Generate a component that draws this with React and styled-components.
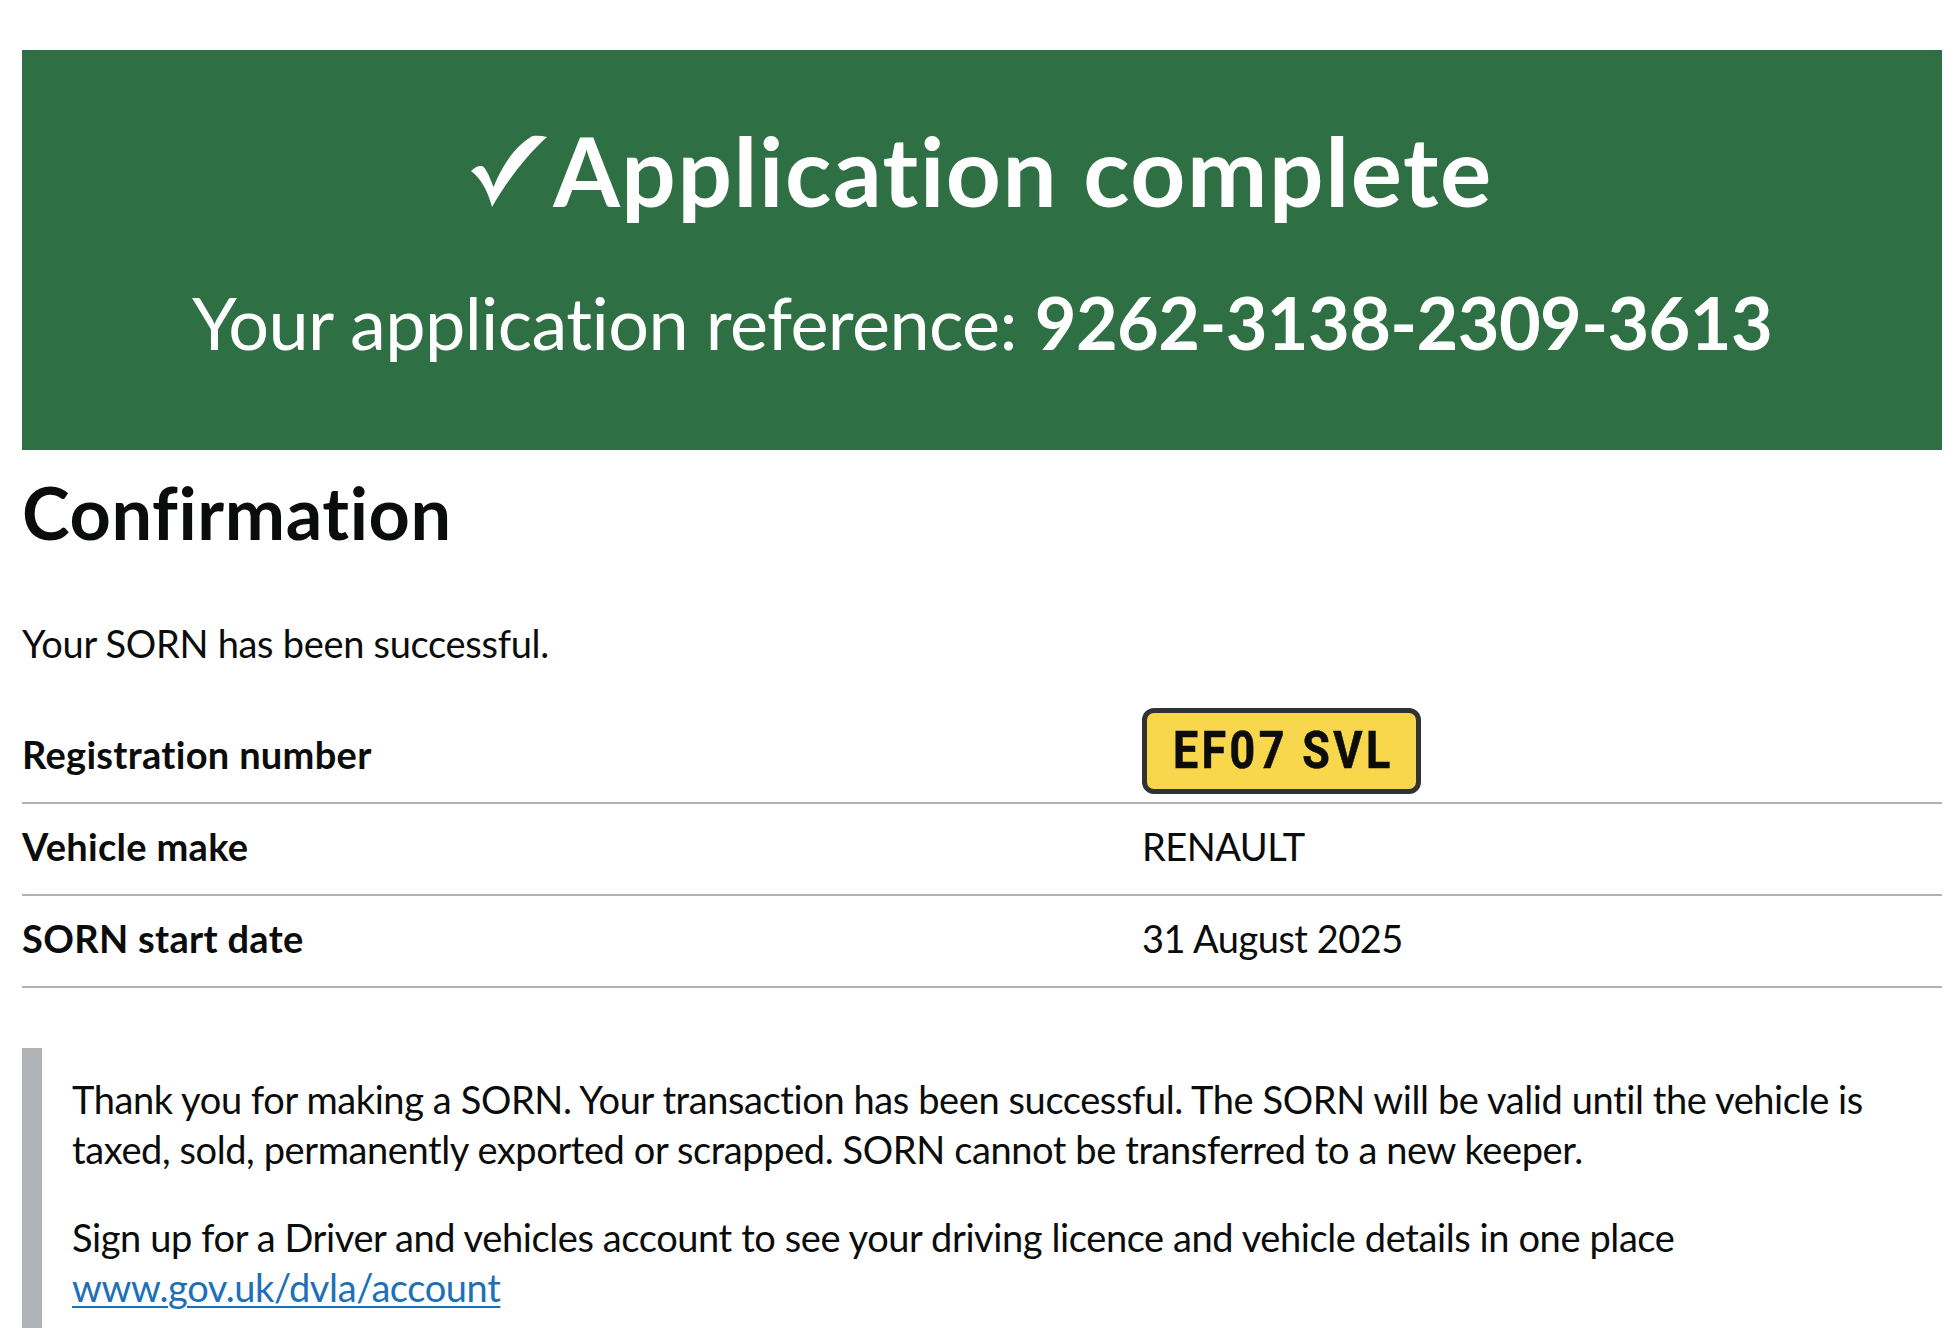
import React from "react";
import styled, { createGlobalStyle } from "styled-components";

const GlobalStyle = createGlobalStyle`
  html, body { margin: 0; padding: 0; background: #ffffff; }
  body {
    color: #0b0c0c;
    font-family: Lato, "Liberation Sans", Arial, sans-serif;
    -webkit-font-smoothing: antialiased;
  }
  * { box-sizing: border-box; }
`;

const Page = styled.main`
  padding: 50px 14px 0 22px;
`;

const Panel = styled.section`
  background: #2f6f44;
  color: #ffffff;
  text-align: center;
  padding: 70px 30px 88px;
`;

const PanelTitle = styled.h1`
  margin: 0;
  font-size: 96px;
  line-height: 100px;
  font-weight: 700;
  letter-spacing: 1.6px;
`;

const TickIcon = styled.svg`
  display: inline-block;
  width: 76px;
  height: 72px;
  margin-right: 6px;
  vertical-align: baseline;
  fill: #ffffff;
`;

const PanelBody = styled.div`
  margin-top: 62px;
  font-size: 72px;
  line-height: 80px;
  font-weight: 400;
  letter-spacing: -0.6px;

  strong {
    font-weight: 700;
  }
`;

const Heading = styled.h2`
  margin: 22px 0 0;
  font-size: 72px;
  line-height: 80px;
  font-weight: 700;
  letter-spacing: 0.6px;
`;

const Lead = styled.p`
  margin: 66px 0 44px;
  font-size: 38px;
  line-height: 50px;
  letter-spacing: -0.3px;
`;

const SummaryList = styled.dl`
  margin: 0;
  font-size: 38px;
  line-height: 50px;
`;

const Row = styled.div`
  display: grid;
  grid-template-columns: 1120px 1fr;
  padding: 17px 0 23px;
  border-bottom: 2px solid #b1b4b6;
`;

const Key = styled.dt`
  margin: 0;
  font-weight: 700;
  letter-spacing: 0.3px;
`;

const Value = styled.dd`
  margin: 0;
  letter-spacing: -0.5px;
`;

const Plate = styled.div`
  display: flex;
  align-items: center;
  justify-content: center;
  width: 279px;
  height: 86px;
  margin: -21px 0 -15px;
  background: #f8d74c;
  border: 5px solid #323232;
  border-radius: 12px;
  color: #0b0c0c;
`;

const PlateText = styled.span`
  display: inline-block;
  font-family: Roboto, "DejaVu Sans", sans-serif;
  font-weight: 700;
  font-size: 52px;
  line-height: 1;
  letter-spacing: 4px;
  margin-right: -4px;
  transform: scaleX(0.86);
  -webkit-text-stroke: 0.6px #0b0c0c;
`;

const Inset = styled.div`
  margin-top: 60px;
  border-left: 20px solid #b1b4b6;
  padding: 26px 30px 30px 30px;
  font-size: 38px;
  line-height: 50px;
  letter-spacing: -0.4px;
`;

const InsetPara = styled.p`
  margin: 0 0 38px;
  &:last-child {
    margin-bottom: 0;
  }
`;

const Link = styled.a`
  color: #1d70b8;
  text-decoration: underline;
  text-decoration-thickness: 2px;
  text-underline-offset: 4px;
`;

const rows = [
  { key: "Registration number", plate: "EF07 SVL" },
  { key: "Vehicle make", value: "RENAULT" },
  { key: "SORN start date", value: "31 August 2025" },
];

function Tick() {
  return (
    <TickIcon viewBox="0 0 76 72" aria-hidden="true">
      <path d="M0 36 C4 32 9 30 12 31.5 C16 35 19.5 44 22.5 52 C31 31 44 11 61 1.2 C66 0.2 71 0.8 76 2 C58 18 37 44 21 72 C17 57 10 43 0 36 Z" />
    </TickIcon>
  );
}

export default function App() {
  return (
    <>
      <GlobalStyle />
      <Page>
        <Panel>
          <PanelTitle>
            <Tick />
            Application complete
          </PanelTitle>
          <PanelBody>
            Your application reference: <strong>9262-3138-2309-3613</strong>
          </PanelBody>
        </Panel>

        <Heading>Confirmation</Heading>
        <Lead>Your SORN has been successful.</Lead>

        <SummaryList>
          {rows.map((r) => (
            <Row key={r.key}>
              <Key>{r.key}</Key>
              <Value>
                {r.plate ? (
                  <Plate>
                    <PlateText>{r.plate}</PlateText>
                  </Plate>
                ) : (
                  r.value
                )}
              </Value>
            </Row>
          ))}
        </SummaryList>

        <Inset>
          <InsetPara>
            Thank you for making a SORN. Your transaction has been successful. The SORN will be valid
            until the vehicle is taxed, sold, permanently exported or scrapped. SORN cannot be
            transferred to a new keeper.
          </InsetPara>
          <InsetPara>
            Sign up for a Driver and vehicles account to see your driving licence and vehicle details
            in one place <Link href="#">www.gov.uk/dvla/account</Link>
          </InsetPara>
        </Inset>
      </Page>
    </>
  );
}
